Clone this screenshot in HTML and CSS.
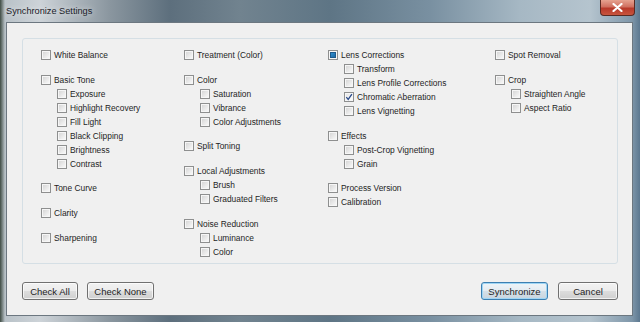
FILE: index.html
```html
<!DOCTYPE html>
<html lang="en">
<head>
<meta charset="UTF-8">
<meta name="viewport" content="width=device-width, initial-scale=1.0">
<title>Synchronize Settings</title>
<link rel="stylesheet" href="styles.css">
</head>
<body>

<div class="window">
  <div class="titlebar">
    <span class="title">Synchronize Settings</span>
    <span class="close">
      <svg width="11" height="9" viewBox="0 0 11 9"><path d="M1.5 1 L9.5 8 M9.5 1 L1.5 8" stroke="#fff" stroke-width="2.2" stroke-linecap="round"/></svg>
    </span>
  </div>

  <div class="client">
    <div class="options">
      <div class="col">
        <div class="group">
          <div class="item"><span class="box"></span>White Balance</div>
        </div>
        <div class="group">
          <div class="item"><span class="box"></span>Basic Tone</div>
          <div class="item sub"><span class="box"></span>Exposure</div>
          <div class="item sub"><span class="box"></span>Highlight Recovery</div>
          <div class="item sub"><span class="box"></span>Fill Light</div>
          <div class="item sub"><span class="box"></span>Black Clipping</div>
          <div class="item sub"><span class="box"></span>Brightness</div>
          <div class="item sub"><span class="box"></span>Contrast</div>
        </div>
        <div class="group">
          <div class="item"><span class="box"></span>Tone Curve</div>
        </div>
        <div class="group">
          <div class="item"><span class="box"></span>Clarity</div>
        </div>
        <div class="group">
          <div class="item"><span class="box"></span>Sharpening</div>
        </div>
      </div>

      <div class="col">
        <div class="group">
          <div class="item"><span class="box"></span>Treatment (Color)</div>
        </div>
        <div class="group">
          <div class="item"><span class="box"></span>Color</div>
          <div class="item sub"><span class="box"></span>Saturation</div>
          <div class="item sub"><span class="box"></span>Vibrance</div>
          <div class="item sub"><span class="box"></span>Color Adjustments</div>
        </div>
        <div class="group">
          <div class="item"><span class="box"></span>Split Toning</div>
        </div>
        <div class="group">
          <div class="item"><span class="box"></span>Local Adjustments</div>
          <div class="item sub"><span class="box"></span>Brush</div>
          <div class="item sub"><span class="box"></span>Graduated Filters</div>
        </div>
        <div class="group">
          <div class="item"><span class="box"></span>Noise Reduction</div>
          <div class="item sub"><span class="box"></span>Luminance</div>
          <div class="item sub"><span class="box"></span>Color</div>
        </div>
      </div>

      <div class="col">
        <div class="group">
          <div class="item"><span class="box mixed"><span class="fill"></span></span>Lens Corrections</div>
          <div class="item sub"><span class="box"></span>Transform</div>
          <div class="item sub"><span class="box"></span>Lens Profile Corrections</div>
          <div class="item sub"><span class="box checked"><svg width="8" height="8" viewBox="0 0 8 8"><path d="M1.3 4.2 L3.2 6.4 L6.9 1.2" fill="none" stroke="#2a4a8a" stroke-width="1.3"/></svg></span>Chromatic Aberration</div>
          <div class="item sub"><span class="box"></span>Lens Vignetting</div>
        </div>
        <div class="group">
          <div class="item"><span class="box"></span>Effects</div>
          <div class="item sub"><span class="box"></span>Post-Crop Vignetting</div>
          <div class="item sub"><span class="box"></span>Grain</div>
        </div>
        <div class="group">
          <div class="item"><span class="box"></span>Process Version</div>
          <div class="item"><span class="box"></span>Calibration</div>
        </div>
      </div>

      <div class="col">
        <div class="group">
          <div class="item"><span class="box"></span>Spot Removal</div>
        </div>
        <div class="group">
          <div class="item"><span class="box"></span>Crop</div>
          <div class="item sub"><span class="box"></span>Straighten Angle</div>
          <div class="item sub"><span class="box"></span>Aspect Ratio</div>
        </div>
      </div>
    </div>

    <div class="buttons">
      <button class="btn w-all">Check All</button>
      <button class="btn w-none">Check None</button>
      <button class="btn default w-sync">Synchronize</button>
      <button class="btn w-cancel">Cancel</button>
    </div>
  </div>
</div>

</body>
</html>
```

FILE: styles.css
```css
/* Page */
body {
  margin: 0;
  font-family: "Liberation Sans", Arial, sans-serif;
}

/* Glass window frame */
.window {
  width: 640px;
  height: 322px;
  box-sizing: border-box;
  display: flex;
  flex-direction: column;
  background: linear-gradient(90deg, #3f4c44 0px, #b9c2c8 5px, #cdd3d8 40px, #8a969f 110px, #5d6f7d 170px, #71838f 240px, #5e7585 330px, #7990a1 430px, #a6b8c4 520px, #b5c4ce 590px, #7f97aa 632px, #5c7890 640px);
}

.titlebar {
  height: 22px;
  display: flex;
  align-items: flex-start;
  padding: 0 5px 0 6px;
}

.title {
  font-size: 9.2px;
  line-height: 22px;
  color: #1b2129;
  text-shadow: 0 0 6px rgba(255, 255, 255, 0.8);
}

/* Red close button, overlapping the frame */
.close {
  margin-left: auto;
  width: 35px;
  height: 16px;
  box-sizing: border-box;
  border: 1px solid #5a2a22;
  border-top: none;
  border-radius: 0 0 4px 4px;
  background: linear-gradient(#e6a290 0%, #d07060 45%, #b8392a 55%, #c8553e 100%);
  display: flex;
  align-items: center;
  justify-content: center;
}

/* Client area */
.client {
  margin-left: 6px;
  width: 627px;
  height: 294px;
  box-sizing: border-box;
  border: 1px solid #6c7780;
  background-color: #f0f0f0;
  padding: 15px 14px 15px 15px;
  display: flex;
  flex-direction: column;
  gap: 18px;
}

/* The group box with the four columns */
.options {
  height: 226px;
  box-sizing: border-box;
  border: 1px solid #d5dfe5;
  border-radius: 3px;
  padding: 9px 0 0 18px;
  display: grid;
  grid-template-columns: 143px 144px 167px 1fr;
}

.col {
  display: flex;
  flex-direction: column;
  gap: 10.7px;
}

.item {
  height: 14px;
  display: flex;
  align-items: center;
  gap: 3px;
  font-size: 8.4px;
  color: #1e1e1e;
  white-space: nowrap;
}

.item.sub {
  padding-left: 16px;
}

/* Checkbox */
.box {
  width: 10px;
  height: 10px;
  box-sizing: border-box;
  flex: none;
  border: 1px solid #8e8f8f;
  box-shadow: inset 0 0 0 1px #f6f6f6;
  background: linear-gradient(135deg, #d2d2d2, #f4f4f4 80%);
  display: flex;
  align-items: center;
  justify-content: center;
}

.box.checked {
  background: linear-gradient(135deg, #e4e4e4, #fafafa 80%);
}

.box .fill {
  width: 6px;
  height: 6px;
  box-sizing: border-box;
  border: 1px solid #1d5a8c;
  background: linear-gradient(135deg, #2f8fd0, #1e6aa6);
}

/* Buttons */
.buttons {
  display: flex;
  gap: 9px;
}

.btn {
  height: 18px;
  box-sizing: border-box;
  border: 1px solid #707070;
  border-radius: 3px;
  padding: 0;
  font-family: "Liberation Sans", Arial, sans-serif;
  font-size: 9.5px;
  color: #1e1e1e;
  background: linear-gradient(#f2f2f2 0%, #ebebeb 50%, #dddddd 51%, #cfcfcf 100%);
  box-shadow: inset 0 0 0 1px rgba(255, 255, 255, 0.7);
}

.btn.default {
  margin-left: auto;
  border-color: #3c7fb1;
  box-shadow: inset 0 0 0 1px #9fd6f5;
  background: linear-gradient(#eef4f8 0%, #e3ebf1 50%, #d5e0e8 51%, #c8d5df 100%);
}

.w-all { width: 56px; }
.w-none { width: 67px; }
.w-sync { width: 67px; margin-right: 1px; }
.w-cancel { width: 60px; }
```
